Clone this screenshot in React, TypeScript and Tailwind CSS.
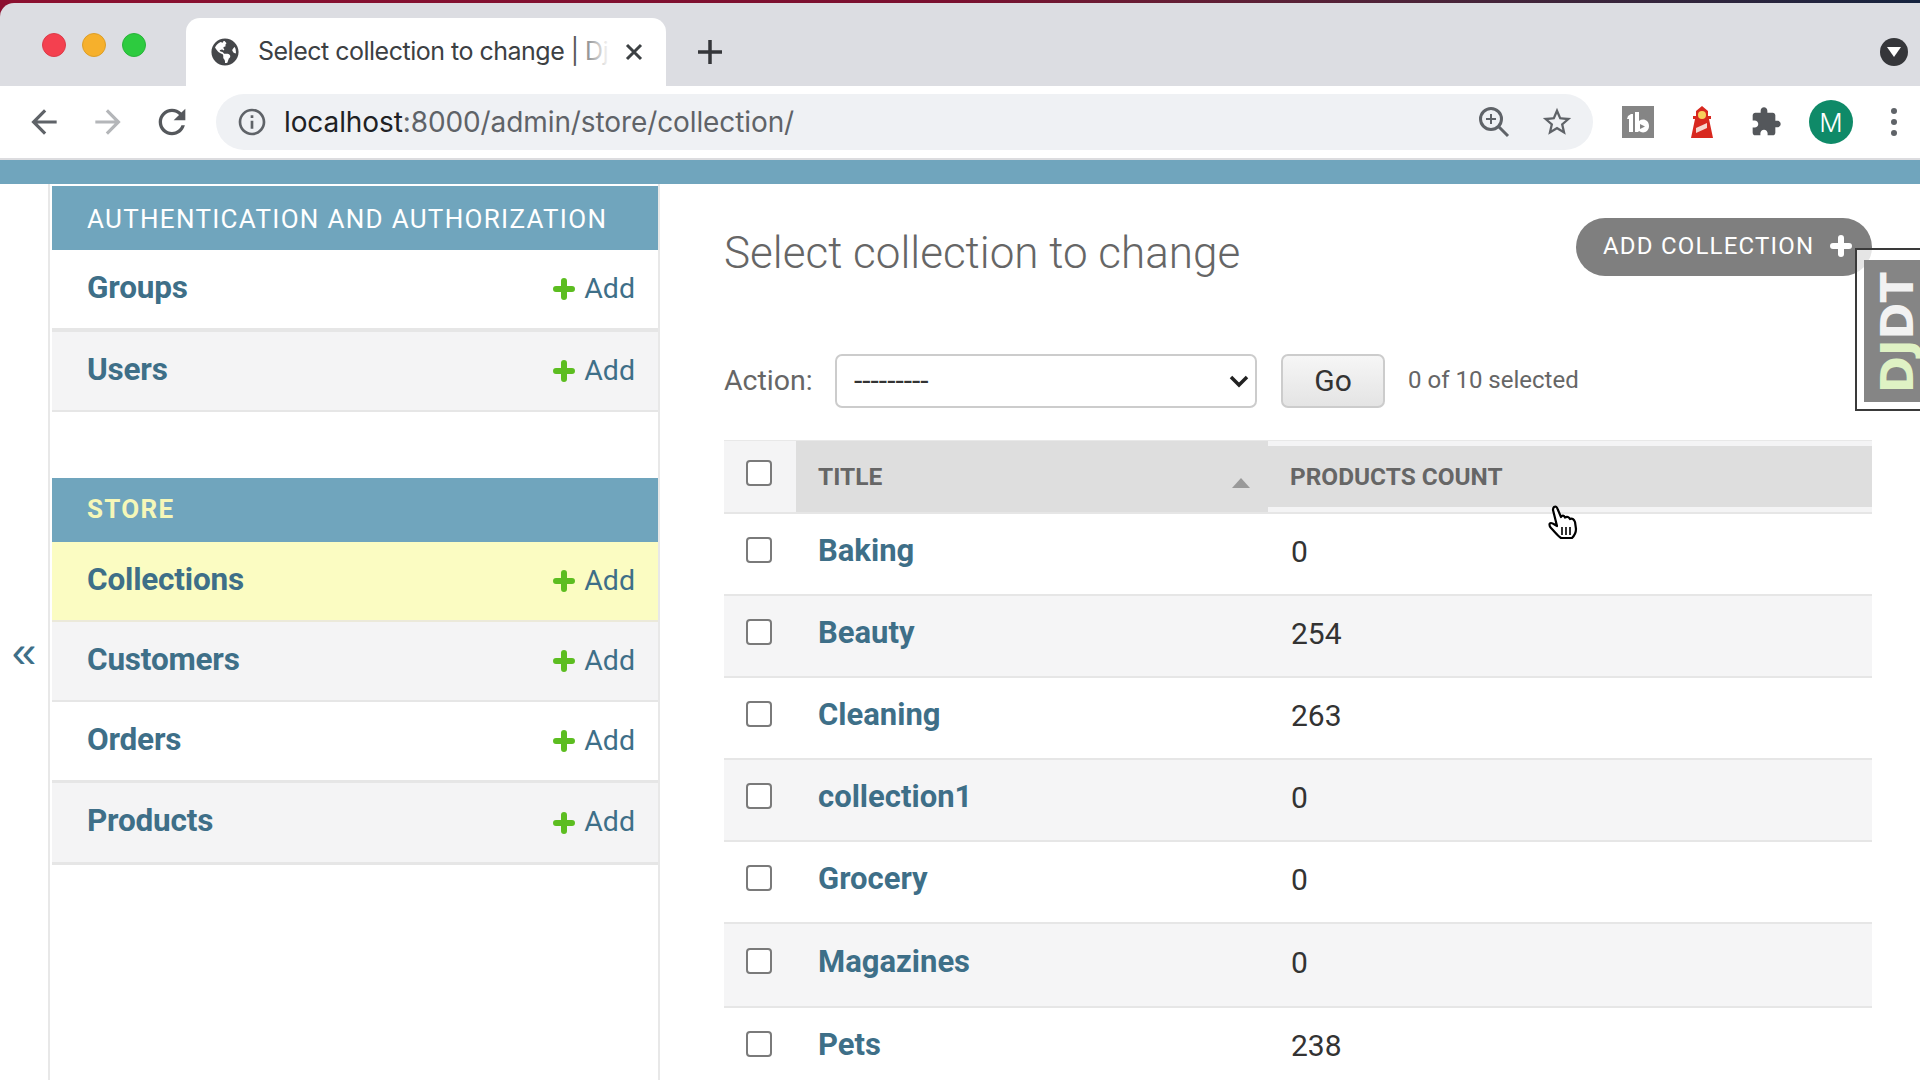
import React from "react";
import { FaGlobeAmericas } from "react-icons/fa";

const M = ({ d, size = 30, color = "#5f6368" }: { d: string; size?: number; color?: string }) => (
  <svg width={size} height={size} viewBox="0 0 24 24" fill={color}>
    <path d={d} />
  </svg>
);

const Plus = ({ size = 22, color = "#5cbd20" }: { size?: number; color?: string }) => (
  <svg width={size} height={size} viewBox="0 0 22 22" fill="none" stroke={color} strokeWidth="6" strokeLinecap="round">
    <path d="M11 3v16M3 11h16" />
  </svg>
);

const NavRow = ({ name, bg, border, h = 78, bw = 2 }: { name: string; bg: string; border: string; h?: number; bw?: number }) => (
  <div className="flex items-center justify-between pl-[35px] pr-[23px]" style={{ height: h + bw, background: bg, borderBottom: `${bw}px solid ${border}` }}>
    <span className="text-[31.5px] font-bold text-[#3e6f88] tracking-[-0.2px] mb-[3px]">{name}</span>
    <span className="flex items-center gap-[9px] text-[#3e6f88] text-[28.5px]">
      <Plus />
      <span>Add</span>
    </span>
  </div>
);

const Cap = ({ children, yellow }: { children: React.ReactNode; yellow?: boolean }) => (
  <div className={`h-[64px] bg-[#70a5bd] flex items-center pl-[35px] text-[26px] tracking-[1.3px] ${yellow ? "text-[#f5f7b8] font-bold pb-[2px]" : "text-white pt-[2px]"}`}>
    {children}
  </div>
);

const rows: [string, string][] = [
  ["Baking", "0"],
  ["Beauty", "254"],
  ["Cleaning", "263"],
  ["collection1", "0"],
  ["Grocery", "0"],
  ["Magazines", "0"],
  ["Pets", "238"],
];

const Check = () => (
  <input type="checkbox" className="appearance-none block w-[26px] h-[26px] border-2 border-[#7a7a7a] rounded-[4px] bg-white" />
);

export default function App() {
  return (
    <div className="relative w-[1920px] h-[1080px] overflow-hidden bg-white font-['Roboto',sans-serif]">
      <div className="pt-[3px] bg-gradient-to-r from-[#8c1030] via-[#7a1030] to-[#15233f]">
        {/* tab strip */}
        <div className="h-[83px] bg-[#dcdde2] rounded-tl-[14px] flex items-end">
          <div className="w-[186px] h-[83px] flex items-center pt-[1px]">
            <div className="flex gap-[16px] pl-[42px]">
              <span className="w-[24px] h-[24px] rounded-full bg-[#f4404f] border border-[#dc3a48]" />
              <span className="w-[24px] h-[24px] rounded-full bg-[#f6b02c] border border-[#dc9e28]" />
              <span className="w-[24px] h-[24px] rounded-full bg-[#2dcb3f] border border-[#28b339]" />
            </div>
          </div>
          <div className="relative w-[480px] h-[68px] bg-white rounded-t-[14px] flex items-center pl-[25px]">
            <FaGlobeAmericas size={28} color="#45474a" />
            <span className="ml-[19px] whitespace-nowrap text-[25px] text-[#3c4043] font-['Inter',sans-serif] tracking-[-0.5px]">
              Select collection to change | Dj
            </span>
            <div className="absolute left-[388px] top-0 w-[36px] h-[68px] bg-gradient-to-r from-white/10 to-white" />
            <svg className="absolute left-[439px] top-[25px]" width="18" height="18" viewBox="0 0 18 18" stroke="#3c4043" strokeWidth="3">
              <path d="M2 2l14 14M16 2L2 16" />
            </svg>
          </div>
          <div className="h-[68px] flex items-center pl-[31px] flex-1">
            <svg width="26" height="26" viewBox="0 0 26 26" stroke="#35363a" strokeWidth="3.5">
              <path d="M13 1v24M1 13h24" />
            </svg>
            <span className="ml-auto mr-[12px] w-[28px] h-[28px] rounded-full bg-[#35363a] flex items-center justify-center">
              <svg width="16" height="12" viewBox="0 0 16 12" fill="#fff">
                <path d="M1 1h14L8 11z" />
              </svg>
            </span>
          </div>
        </div>
      </div>

      {/* toolbar */}
      <div className="h-[72px] flex items-center bg-white">
        <div className="flex items-center pl-[12px] w-[216px]">
          <span className="w-[64px] flex justify-center">
            <M size={38} d="M20 11H7.83l5.59-5.59L12 4l-8 8 8 8 1.41-1.41L7.83 13H20v-2z" />
          </span>
          <span className="w-[64px] flex justify-center">
            <M size={38} color="#b4b6b9" d="M12 4l-1.41 1.41L16.17 11H4v2h12.17l-5.58 5.59L12 20l8-8z" />
          </span>
          <span className="w-[64px] flex justify-center">
            <M size={40} color="#55585c" d="M17.65 6.35C16.2 4.9 14.21 4 12 4c-4.42 0-7.99 3.58-7.99 8s3.57 8 7.99 8c3.73 0 6.84-2.55 7.73-6h-2.08c-.82 2.33-3.04 4-5.65 4-3.31 0-6-2.69-6-6s2.69-6 6-6c1.66 0 3.14.69 4.22 1.78L13 11h7V4l-2.35 2.35z" />
          </span>
        </div>
        <div className="w-[1377px] h-[56px] rounded-full bg-[#eff1f4] flex items-center pl-[20px] pr-[19px]">
          <M size={32} d="M11 7h2v2h-2zm0 4h2v6h-2zm1-9C6.48 2 2 6.48 2 12s4.48 10 10 10 10-4.48 10-10S17.52 2 12 2zm0 18c-4.41 0-8-3.59-8-8s3.59-8 8-8 8 3.59 8 8-3.59 8-8 8z" />
          <span className="ml-[16px] text-[28px] text-[#5f6368] font-['Inter',sans-serif] tracking-[-0.1px]">
            <span className="text-[#202124]">localhost</span>:8000/admin/store/collection/
          </span>
          <span className="ml-auto flex items-center gap-[30px]">
            <svg width="32" height="32" viewBox="0 0 32 32" fill="none" stroke="#5f6368" strokeWidth="3">
              <circle cx="13" cy="13" r="10.5" />
              <path d="M21 21l9 9" />
              <path strokeWidth="2" d="M13 8v10M8 13h10" />
            </svg>
            <M size={34} d="M22 9.24l-7.19-.62L12 2 9.19 8.63 2 9.24l5.46 4.73L5.82 21 12 17.27 18.18 21l-1.63-7.03L22 9.24zM12 15.4l-3.76 2.27 1-4.28-3.32-2.88 4.38-.38L12 6.1l1.71 4.04 4.38.38-3.32 2.88 1 4.28L12 15.4z" />
          </span>
        </div>
        <div className="flex items-center pl-[29px]">
          <svg width="32" height="32" viewBox="0 0 32 32">
            <rect width="32" height="32" fill="#858585" />
            <path fill="#fff" d="M6 10l3-2h2v18H7V13H5zM13 6h4v9c4-3 10-1 10 5s-6 8-10 5l-1 1h-3zm5 12v5l5-2.5z" />
          </svg>
          <svg className="ml-[37px]" width="22" height="32" viewBox="0 0 22 32">
            <path fill="#d8281f" d="M11 0l6 5v5h3v3h-2l4 19H0l4-19H2v-3h3V5z" />
            <circle cx="11" cy="9" r="4" fill="#f7cf5c" />
            <path fill="#f6d6cf" d="M5 22l11-5v5L5 27z" />
          </svg>
          <span className="ml-[37px]">
            <M size={32} color="#54575b" d="M20.5 11H19V7c0-1.1-.9-2-2-2h-4V3.5C13 2.12 11.88 1 10.5 1S8 2.12 8 3.5V5H4c-1.1 0-1.99.9-1.99 2v3.8H3.5c1.49 0 2.7 1.21 2.7 2.7s-1.21 2.7-2.7 2.7H2V20c0 1.1.9 2 2 2h3.8v-1.5c0-1.49 1.21-2.7 2.7-2.7 1.49 0 2.7 1.21 2.7 2.7V22H17c1.1 0 2-.9 2-2v-4h1.5c1.38 0 2.5-1.12 2.5-2.5S21.88 11 20.5 11z" />
          </span>
          <span className="ml-[27px] w-[44px] h-[44px] rounded-full bg-[#0f8a68] text-white text-[26px] font-light flex items-center justify-center font-['Inter',sans-serif]">M</span>
          <span className="ml-[38px] flex flex-col gap-[5px]">
            <i className="block w-[6px] h-[6px] rounded-full bg-[#5f6368]" />
            <i className="block w-[6px] h-[6px] rounded-full bg-[#5f6368]" />
            <i className="block w-[6px] h-[6px] rounded-full bg-[#5f6368]" />
          </span>
        </div>
      </div>
      <div className="h-[2px] bg-[#dcdcdf]" />
      <div className="h-[24px] bg-[#70a5bd]" />

      {/* page */}
      <div className="flex">
        <div className="w-[48px] h-[896px] flex items-center justify-center text-[#3e6f88] text-[44px] font-['Liberation_Sans',sans-serif]">
          <span className="relative top-[20px]">«</span>
        </div>
        <div className="w-[612px] h-[896px] border-x-2 border-[#e8e8e8] pt-[2px] pl-[2px]">
          <Cap>AUTHENTICATION AND AUTHORIZATION</Cap>
          <NavRow name="Groups" bg="#ffffff" border="#e6e6e6" bw={4} />
          <NavRow name="Users" bg="#f4f4f5" border="#e6e6e6" />
          <div className="h-[66px]" />
          <Cap yellow>STORE</Cap>
          <NavRow name="Collections" bg="#fbfcc2" border="#ebe9da" />
          <NavRow name="Customers" bg="#f4f4f5" border="#e6e6e6" />
          <NavRow name="Orders" bg="#ffffff" border="#e6e6e6" bw={3} />
          <NavRow name="Products" bg="#f4f4f5" border="#e6e6e6" bw={3} h={79} />
        </div>

        <div className="ml-[64px] w-[1148px]">
          <div className="flex justify-between pt-[34px]">
            <h1 className="text-[44px] font-light text-[#666666] leading-[50px] mt-[10px]">Select collection to change</h1>
            <div className="w-[296px] h-[58px] rounded-full bg-[#7f7f7f] flex items-center pl-[27px] pb-[2px] text-white text-[24px] tracking-[1.2px]">
              ADD COLLECTION
              <span className="ml-[16px]">
                <Plus size={22} color="#ffffff" />
              </span>
            </div>
          </div>

          <div className="flex items-center mt-[76px] h-[54px]">
            <span className="text-[28.5px] text-[#666666] w-[111px]">Action:</span>
            <div className="relative">
              <select className="appearance-none w-[422px] h-[54px] border-2 border-[#cccccc] rounded-[7px] bg-white pl-[17px] pb-[2px] text-[30px] text-[#333333] outline-none">
                <option>---------</option>
              </select>
              <svg className="absolute right-[8px] top-[20px]" width="20" height="14" viewBox="0 0 20 14" fill="none" stroke="#222222" strokeWidth="3.5">
                <path d="M2 3l8 8 8-8" />
              </svg>
            </div>
            <div className="ml-[24px] w-[104px] h-[54px] rounded-[7px] border-2 border-[#cccccc] bg-gradient-to-b from-[#f6f6f6] to-[#e4e4e4] flex items-center justify-center pb-[2px] text-[30px] text-[#333333]">
              Go
            </div>
            <span className="ml-[23px] text-[24px] text-[#666666] mb-[2px]">0 of 10 selected</span>
          </div>

          {/* table */}
          <div className="mt-[32px] border-t border-[#e8e8e8]">
            <div className="flex h-[73px] border-b-2 border-[#e6e6e6] bg-[#f4f4f5]">
              <div className="w-[70px] flex justify-center pt-[19px]">
                <Check />
              </div>
              <div className="relative w-[472px] ml-[2px] bg-[#dedede] flex items-center pl-[22px] pt-[2px] text-[24.5px] font-bold text-[#666666]">
                TITLE
                <svg className="absolute left-[436px] top-[37px]" width="18" height="10" viewBox="0 0 18 10" fill="#999999">
                  <path d="M9 0l9 10H0z" />
                </svg>
              </div>
              <div className="flex-1 py-[5px]">
                <div className="h-full bg-[#dedede] flex items-center pl-[22px] pt-[2px] text-[24.4px] font-bold text-[#666666]">PRODUCTS COUNT</div>
              </div>
            </div>
            {rows.map(([t, n], i) => (
              <div key={t} className={`flex items-center border-b-2 border-[#e6e6e6] pb-[6px] ${i === 5 ? "h-[84px]" : "h-[82px]"} ${i % 2 ? "bg-[#f5f5f6]" : "bg-white"}`}>
                <div className="w-[70px] flex justify-center mb-[2px]">
                  <Check />
                </div>
                <div className="w-[474px] pl-[24px] text-[31px] font-bold text-[#3e6f88]">{t}</div>
                <div className="pl-[23px] text-[30px] text-[#333333]">{n}</div>
              </div>
            ))}
          </div>
        </div>
      </div>

      {/* DjDT handle */}
      <div className="absolute left-[1855px] top-[248px] w-[65px] h-[163px] bg-white/80 border-2 border-r-0 border-[#3a3a3a] pl-[7px] pt-[10px]">
        <div className="h-[142px] bg-[#858585] overflow-hidden flex pt-[9px] pl-[9px]">
          <span className="[writing-mode:vertical-rl] rotate-180 font-['DejaVu_Sans',sans-serif] font-bold text-[44.5px] leading-[50px] h-[124px] text-[#f2f2f2] whitespace-nowrap">
            <span className="text-[#dff2c4]">DJ</span>DT
          </span>
        </div>
      </div>

      {/* cursor */}
      <svg className="absolute left-[1547px] top-[505px]" width="32" height="35" viewBox="0 0 32 35" fill="#ffffff" stroke="#000000" strokeWidth="2.2" strokeLinejoin="round">
        <path d="M7 2C9 1 10 2 11 5L14 12C15 10 17 10 18 12.5C20 11 22 12 23 14C25 13 27 14 28 17L29 24C29 28 27 31 25 33L14 33C11 31 8 27 4 23C2 21 2 18 4 18C6 18 8 20 10 21L6 5C6 3.5 6.5 2.5 7 2Z" />
        <path fill="none" strokeWidth="1.6" d="M15 22v8M19 22v8M23 22v8" />
      </svg>
    </div>
  );
}
